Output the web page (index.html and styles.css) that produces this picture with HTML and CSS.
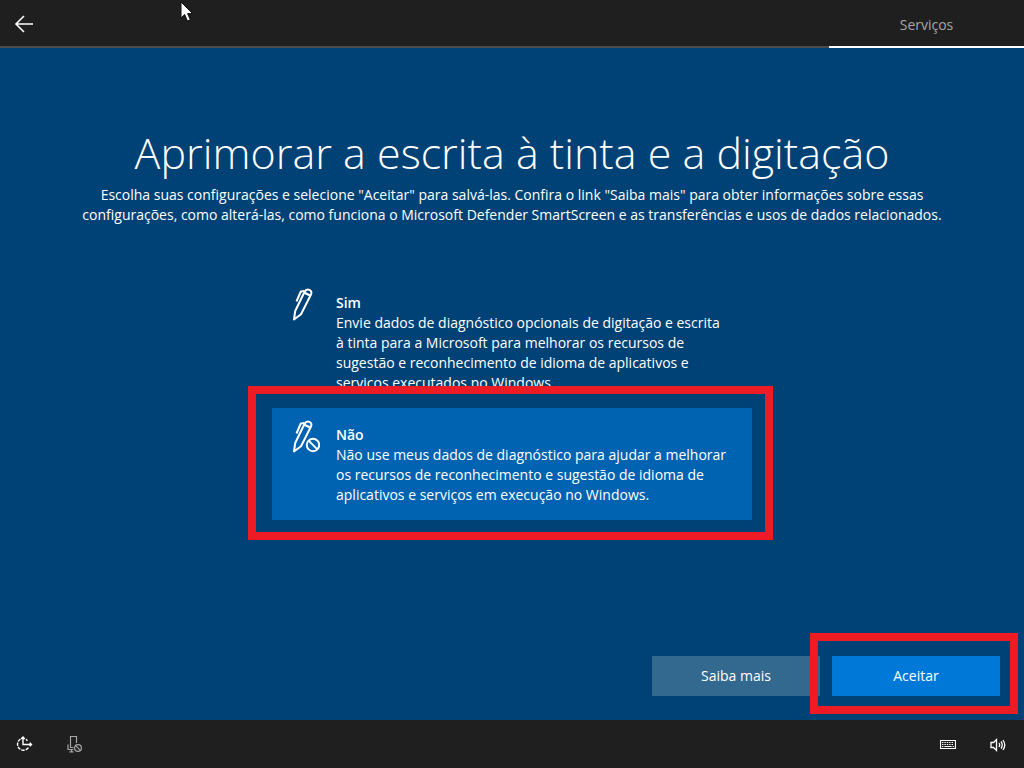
FILE: index.html
```html
<!DOCTYPE html>
<html lang="pt-BR">
<head>
<meta charset="utf-8">
<meta name="viewport" content="width=device-width, initial-scale=1">
<title>Aprimorar a escrita à tinta e a digitação</title>
<link rel="stylesheet" href="styles.css">
</head>
<body>
<header class="topbar">
  <button class="icon-button back" type="button" aria-label="Voltar">
    <svg width="20" height="20" viewBox="0 0 20 20" fill="none" stroke="currentColor" stroke-width="1.6"><path d="M19 10H2M10 2L2 10l8 8"/></svg>
  </button>
  <div class="stage">Serviços</div>
</header>

<main class="page">
  <h1 class="title">Aprimorar a escrita à tinta e a digitação</h1>
  <p class="intro">Escolha suas configurações e selecione "Aceitar" para salvá-las. Confira o link "Saiba mais" para obter informações sobre essas configurações, como alterá-las, como funciona o Microsoft Defender SmartScreen e as transferências e usos de dados relacionados.</p>

  <div class="options" role="radiogroup" aria-label="Aprimorar a escrita à tinta e a digitação">
    <label class="option">
      <input class="option-input" type="radio" name="inking">
      <svg class="option-icon" width="32" height="34" viewBox="0 0 32 34" fill="none" stroke="currentColor" stroke-width="2" stroke-linejoin="round"><path d="M6 32.500l1.200-8.500L16.500 5Q18.300 1.500 21.300 2.800T23 7.500L13 27.300z"/><path d="M16 5.500l6 3M16.500 4l-3.700.5-4.300 10"/></svg>
      <span class="option-text"><strong class="option-name">Sim</strong>Envie dados de diagnóstico opcionais de digitação e escrita à tinta para a Microsoft para melhorar os recursos de sugestão e reconhecimento de idioma de aplicativos e serviços executados no Windows.</span>
    </label>
    <label class="option marked marked-option">
      <input class="option-input" type="radio" name="inking" checked>
      <svg class="option-icon" width="32" height="34" viewBox="0 0 32 34" fill="none" stroke="currentColor" stroke-width="2" stroke-linejoin="round"><path d="M6 32.500l1.200-8.500L16.500 5Q18.300 1.500 21.300 2.800T23 7.500L13 27.300z"/><path d="M16 5.500l6 3M16.500 4l-3.700.5-4.300 10"/><circle class="badge-gap" cx="25" cy="26" r="8.500"/><circle cx="25" cy="26" r="6.200"/><path d="M20.600 21.600l8.800 8.800"/></svg>
      <span class="option-text"><strong class="option-name">Não</strong>Não use meus dados de diagnóstico para ajudar a melhorar os recursos de reconhecimento e sugestão de idioma de aplicativos e serviços em execução no Windows.</span>
    </label>
  </div>

  <div class="actions">
    <button class="button" type="button">Saiba mais</button>
    <div class="marked marked-button"><button class="button primary" type="button">Aceitar</button></div>
  </div>
</main>

<footer class="taskbar">
  <button class="icon-button" type="button" aria-label="Facilidade de acesso">
    <svg width="18" height="18" viewBox="0 0 18 18" fill="none" stroke="currentColor" stroke-width="1.400"><path d="M5.500 4A6 6 0 1 0 13.500 12.500" stroke-dasharray="3.400 1"/><path d="M8 2v7.500h8.500M6.200 4L8 2l1.800 2M14.700 7.700l1.800 1.800-1.800 1.800M11 4.300l1.500 1.500"/></svg>
  </button>
  <button class="icon-button dim" type="button" aria-label="Microfone desativado">
    <svg width="18" height="18" viewBox="0 0 18 18" fill="none" stroke="currentColor" stroke-width="1.200"><path d="M8.500 12.500H5.500V1.500h6V8M3 9.500v5h5.500M6.500 14.500v2.500M4.500 16.800h4"/><circle cx="13" cy="13" r="3.400"/><path d="M10.600 10.600l4.800 4.800"/></svg>
  </button>
  <span class="spacer"></span>
  <button class="icon-button" type="button" aria-label="Teclado na tela">
    <svg width="16" height="18" viewBox="1 0 16 18" fill="none" stroke="currentColor"><path d="M1.500 5.500h15v8h-15z" stroke-width="1.200"/><path d="M3 7.500h12M3 9.500h12" stroke-dasharray="1.400 1"/><path d="M3 11.500h1.400M5.400 11.500h7.200M13.600 11.500H15"/></svg>
  </button>
  <button class="icon-button" type="button" aria-label="Volume">
    <svg width="16" height="18" viewBox="1 0 16 18" fill="none" stroke="currentColor" stroke-width="1.300"><path d="M2 7.500h2.500L7.500 4.500v11l-3-3H2z"/><path d="M10 8q1.300 2 0 4M12 6.500q2.500 3.500 0 7M14 5q3.500 5 0 10"/></svg>
  </button>
</footer>

<svg class="pointer" width="14" height="22" viewBox="0 0 14 22" aria-hidden="true"><path d="M1 1v16l3.700-3.500L7.400 20l2.900-1.200-2.700-6.200h5z" fill="#fff" stroke="#111" stroke-width="1"/></svg>
</body>
</html>
```
FILE: styles.css
```css
* {
  box-sizing: border-box;
}

body {
  margin: 0;
  min-height: 100vh;
  display: flex;
  flex-direction: column;
  background: #004275;
  color: #fff;
  font: 14px/20px "Open Sans", "Noto Sans", sans-serif;
}

button {
  font: inherit;
  color: inherit;
  border: 0;
  padding: 0;
}

svg {
  display: block;
}

.topbar {
  height: 48px;
  display: flex;
  justify-content: space-between;
  background: linear-gradient(#4c4c4c, #4c4c4c) bottom / 100% 2px no-repeat #1f1f1f;
}

.stage {
  width: 195px;
  padding-top: 15px;
  border-bottom: 2px solid #fff;
  text-align: center;
  color: #a6a6a6;
}

.icon-button {
  width: 48px;
  display: flex;
  align-items: center;
  justify-content: center;
  background: none;
}

.dim {
  color: #a6a6a6;
}

.page {
  flex: 1;
  display: flex;
  flex-direction: column;
  padding: 73px 24px 24px;
}

.title {
  margin: 0;
  font-size: 43px;
  line-height: 64px;
  font-weight: 300;
  text-align: center;
}

.intro {
  width: 100%;
  max-width: 900px;
  margin: 0 auto;
  text-align: center;
}

.options {
  width: 100%;
  max-width: 480px;
  margin: 51px auto;
}

.option {
  display: flex;
  gap: 16px;
  padding: 17px 24px 15px 16px;
}

.option:has(:checked) {
  background: #0063b1;
}

.option-input {
  position: absolute;
  opacity: 0;
}

.option-icon {
  flex: none;
  margin-top: -6px;
}

.badge-gap {
  fill: #0063b1;
  stroke: none;
}

.option-text {
  flex: 1;
}

.option-name {
  display: block;
  font-weight: 600;
}

.actions {
  margin-top: auto;
  display: flex;
  justify-content: flex-end;
  gap: 12px;
}

.button {
  width: 168px;
  height: 40px;
  background: #33688f;
}

.primary {
  display: block;
  background: #0078d7;
}

.marked {
  position: relative;
}

.marked::after {
  content: "";
  position: absolute;
  border: 8px solid #ed1c24;
  pointer-events: none;
}

.marked-option::after {
  inset: -22px -21px -20px -24px;
}

.marked-button::after {
  inset: -23px -18px -18px -22px;
}

.taskbar {
  height: 48px;
  display: flex;
  gap: 2px;
  padding-right: 2px;
  background: #1f1f1f;
}

.spacer {
  flex: 1;
}

.pointer {
  position: absolute;
  left: 180px;
  top: 1px;
}
```
